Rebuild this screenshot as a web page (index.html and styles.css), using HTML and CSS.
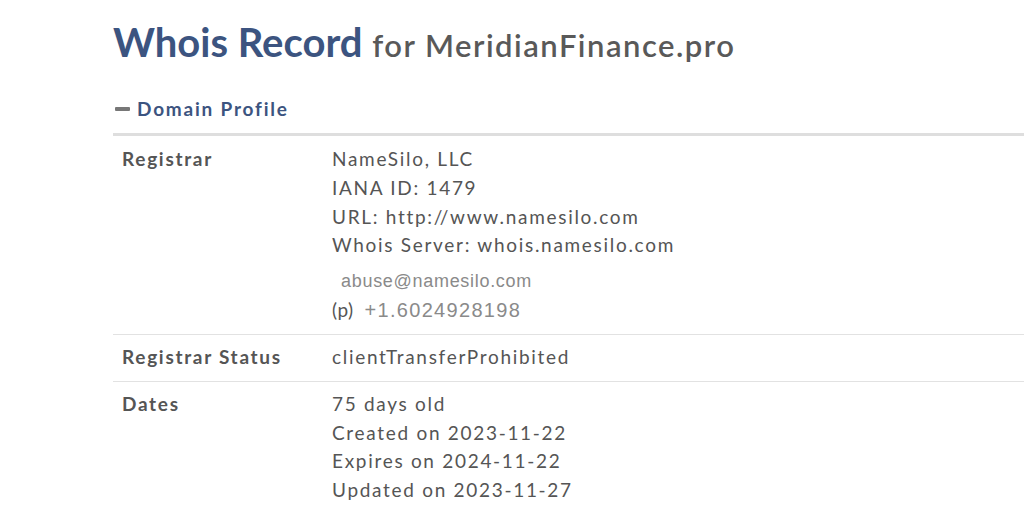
FILE: index.html
```html
<!DOCTYPE html>
<html lang="en">
<head>
    <meta charset="UTF-8">
    <meta name="viewport" content="width=device-width, initial-scale=1.0">
    <title>Whois Record for MeridianFinance.pro</title>
    <link rel="stylesheet" href="styles.css">
</head>
<body>
    <div class="page">
        <h1 class="title">Whois Record <span class="domain">for MeridianFinance.pro</span></h1>

        <div class="section">
            <h2 class="section-head"><span class="minus"></span>Domain Profile</h2>

            <div class="profile">
                <div class="row">
                    <div class="label">Registrar</div>
                    <div class="value">
                        <div>NameSilo, LLC</div>
                        <div>IANA ID: 1479</div>
                        <div>URL: http://www.namesilo.com</div>
                        <div>Whois Server: whois.namesilo.com</div>
                        <div class="contact email">abuse@namesilo.com</div>
                        <div class="contact-line"><span class="tag">(p)</span><span class="contact">+1.6024928198</span></div>
                    </div>
                </div>
                <div class="row">
                    <div class="label">Registrar Status</div>
                    <div class="value">
                        <div>clientTransferProhibited</div>
                    </div>
                </div>
                <div class="row">
                    <div class="label">Dates</div>
                    <div class="value">
                        <div>75 days old</div>
                        <div>Created on 2023-11-22</div>
                        <div>Expires on 2024-11-22</div>
                        <div>Updated on 2023-11-27</div>
                    </div>
                </div>
            </div>
        </div>
    </div>
</body>
</html>
```

FILE: styles.css
```css
body {
    font-family: Lato, "Open Sans", sans-serif;
    background-color: #fff;
    color: #555;
    margin: 0;
    padding: 0;
    overflow: hidden;
}

.page {
    padding: 18px 0 0 113px;
}

.title {
    font-size: 40px;
    font-weight: bold;
    color: #3c5480;
    margin: 0;
    line-height: 48px;
    white-space: nowrap;
}

.domain {
    font-size: 31px;
    font-weight: 600;
    color: #595959;
    letter-spacing: 1.5px;
}

.section {
    margin-top: 28px;
}

.section-head {
    display: flex;
    align-items: center;
    font-size: 19px;
    font-weight: bold;
    color: #3c5480;
    margin: 0;
    line-height: 24px;
    padding-bottom: 12px;
    border-bottom: 3px solid #dedede;
    letter-spacing: 1.8px;
}

.minus {
    display: inline-block;
    width: 15px;
    height: 4px;
    background-color: #777;
    border-radius: 1px;
    margin: 0 7px 0 2px;
}

.row {
    display: flex;
    padding: 8px 0 9px;
    border-bottom: 1px solid #e2e2e2;
    font-size: 19px;
    line-height: 28.8px;
    letter-spacing: 1.7px;
}

.row:first-child {
    padding-top: 9px;
}

.row:last-child {
    border-bottom: none;
}

.label {
    width: 210px;
    padding-left: 9px;
    font-weight: bold;
    color: #555;
    flex-shrink: 0;
}

.value {
    color: #555;
}

.contact {
    font-family: "Liberation Sans", Arial, sans-serif;
    color: #8a8a8a;
}

.email {
    font-size: 18px;
    letter-spacing: 0.7px;
    padding: 7px 0 0 9px;
    line-height: 29px;
}

.contact-line {
    display: flex;
    align-items: center;
}

.contact-line .contact {
    font-size: 20px;
    letter-spacing: 1.3px;
    margin-left: 11px;
}

.tag {
    font-size: 19px;
    letter-spacing: 0.5px;
}
```
